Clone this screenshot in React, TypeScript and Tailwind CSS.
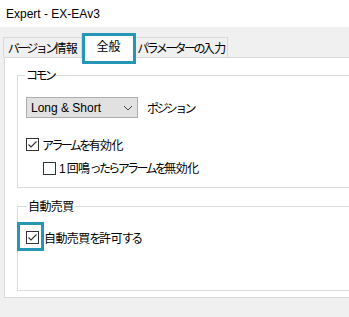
import React from "react";

const jp = "font-['Noto_Sans_CJK_JP',sans-serif] whitespace-nowrap";

function Ka({ children }: { children: React.ReactNode }) {
  return <span className="tracking-[-2.6px]">{children}</span>;
}
function Kj({ children }: { children: React.ReactNode }) {
  return <span className="tracking-[-0.6px]">{children}</span>;
}

function Check({ checked }: { checked: boolean }) {
  return (
    <div className="w-[13px] h-[13px] border border-[#333333] bg-white shrink-0 flex items-center justify-center">
      {checked && (
        <svg width="11" height="11" viewBox="0 0 11 11">
          <polyline points="1.5,5.5 4,8 9.5,2.5" fill="none" stroke="#333333" strokeWidth="1.1" />
        </svg>
      )}
    </div>
  );
}

export default function App() {
  return (
    <div className={`w-[349px] h-[317px] bg-[#f0f0f0] overflow-hidden text-black ${jp}`}>
      <div className="h-[27px] bg-white flex items-center pl-[6px] text-[12px] font-['Liberation_Sans',sans-serif] pt-[1px]">
        Expert - EX-EAv3
      </div>
      <div className="h-[30px] flex items-end pl-[3px] text-[12px]">
        <div className="w-[78px] h-[20px] border border-b-0 border-r-0 border-[#d9d9d9] bg-[#f0f0f0] flex items-center justify-center">
          <span><Ka>バージョン</Ka><Kj>情報</Kj></span>
        </div>
        <div className="relative z-10 w-[55px] h-[24px] -mb-px bg-white border border-b-0 border-[#d9d9d9] flex items-center justify-center pb-[2px]">
          <span>全般</span>
          <div className="absolute left-[0px] top-[-2px] w-[54px] h-[31px] border-[3px] border-[#2596b4]" />
        </div>
        <div className="w-[92px] h-[20px] border border-b-0 border-l-0 border-[#d9d9d9] bg-[#f0f0f0] flex items-center justify-center">
          <span><Ka>パラメーターの</Ka><Kj>入力</Kj></span>
        </div>
      </div>
      <div className="ml-[4px] w-[360px] h-[241px] bg-white border border-[#d9d9d9] pt-[17px] pl-[12px] text-[12px]">
        <div className="relative border border-[#dcdcdc] pt-[21px] pl-[8px] pb-[12px]">
          <div className="absolute left-[7px] top-[-9px] bg-white px-[1px] leading-[16px]"><Ka>コモン</Ka></div>
          <div className="flex items-center h-[21px]">
            <div className="w-[112px] h-[21px] bg-[#e1e1e1] border border-[#adadad] flex items-center justify-between pl-[4px] pr-[4px] font-['Liberation_Sans',sans-serif] text-[12px]">
              <span>Long &amp; Short</span>
              <svg width="10" height="6" viewBox="0 0 10 6">
                <polyline points="1,1 5,5 9,1" fill="none" stroke="#444" strokeWidth="1" />
              </svg>
            </div>
            <span className="ml-[9px]"><Ka>ポジション</Ka></span>
          </div>
          <div className="mt-[20px] h-[13px] flex items-center gap-[3px]">
            <Check checked />
            <span><Ka>アラームを</Ka><Kj>有効化</Kj></span>
          </div>
          <div className="mt-[11px] ml-[17px] h-[13px] flex items-center gap-[3px]">
            <Check checked={false} />
            <span>
              <span className="font-['Liberation_Sans',sans-serif] mr-[1px]">1</span>
              <Kj>回鳴</Kj>
              <Ka>ったらアラームを</Ka>
              <Kj>無効化</Kj>
            </span>
          </div>
        </div>
        <div className="relative mt-[18px] border border-[#dcdcdc] pt-[24px] pl-[8px] pb-[46px]">
          <div className="absolute left-[9px] top-[-9px] bg-white px-[1px] leading-[16px]"><Kj>自動売買</Kj></div>
          <div className="h-[13px] flex items-center gap-[5px]">
            <div className="relative">
              <Check checked />
              <div className="absolute left-[-9px] top-[-9px] w-[27px] h-[29px] border-[3px] border-[#2596b4]" />
            </div>
            <span><Kj>自動売買</Kj><Ka>を</Ka><Kj>許可</Kj><Ka>する</Ka></span>
          </div>
        </div>
      </div>
    </div>
  );
}
